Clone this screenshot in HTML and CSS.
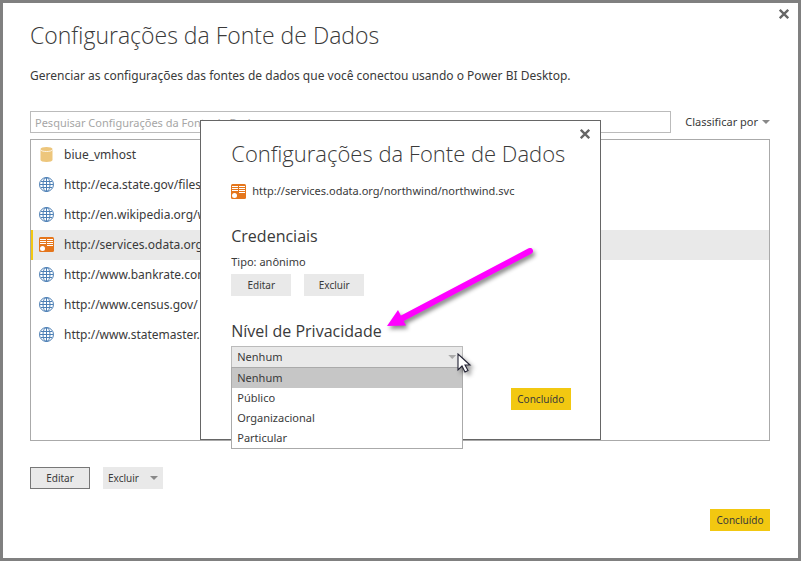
FILE: index.html
```html
<!DOCTYPE html>
<html lang="pt-BR">
<head>
<meta charset="utf-8">
<meta name="viewport" content="width=device-width, initial-scale=1">
<title>Configurações da Fonte de Dados</title>
<link rel="stylesheet" href="styles.css">
</head>
<body>
<svg class="sprite" aria-hidden="true">
  <symbol id="close" viewBox="0 0 10 10"><path d="M.8 .8l8.400 8.400M9.200 .8l-8.400 8.400" fill="none" stroke="#666" stroke-width="2.300"/></symbol>
  <symbol id="globe" viewBox="0 0 15 15"><g fill="none" stroke="#4c7fb5"><circle cx="7.500" cy="7.500" r="7"/><ellipse cx="7.500" cy="7.500" rx="3.500" ry="7"/><path d="M7.500 .5v14M.5 7.500h14M2 4.500h11M2 10.500h11"/></g></symbol>
  <symbol id="database" viewBox="0 0 15 15"><path d="M1.500 2.500v10.500c0 1 2.500 2 6 2s6-1 6-2V2.500z" fill="#edc67c"/><ellipse cx="7.500" cy="2" rx="6" ry="2" fill="#edc67c"/><path d="M1.500 2.700c.6 1.200 3 1.800 6 1.800s5.400-.6 6-1.800" fill="none" stroke="#fff" stroke-width=".8"/></symbol>
  <symbol id="feed" viewBox="0 0 15 15"><rect width="15" height="15" rx="1.500" fill="#e5761c"/><path d="M1 2.500h6M8 2.500h6M1 4.500h6M8 4.500h6M1 6.500h6M8 6.500h6M8 8.500h6" stroke="#fff"/><circle cx="3.500" cy="11.500" r="2.500" fill="#fff"/></symbol>
</svg>

<main class="window">
  <button class="close" type="button" aria-label="Fechar"><svg><use href="#close"/></svg></button>
  <h1 class="title">Configurações da Fonte de Dados</h1>
  <p class="intro">Gerenciar as configurações das fontes de dados que você conectou usando o Power BI Desktop.</p>

  <div class="toolbar">
    <input class="search" type="text" aria-label="Pesquisar" placeholder="Pesquisar Configurações da Fonte de Dados">
    <button class="sort" type="button">Classificar por <span class="caret"></span></button>
  </div>

  <ul class="sources">
    <li class="source"><svg class="icon"><use href="#database"/></svg>biue_vmhost</li>
    <li class="source"><svg class="icon"><use href="#globe"/></svg>http://eca.state.gov/files</li>
    <li class="source"><svg class="icon"><use href="#globe"/></svg>http://en.wikipedia.org/w</li>
    <li class="source selected"><svg class="icon"><use href="#feed"/></svg>http://services.odata.org</li>
    <li class="source"><svg class="icon"><use href="#globe"/></svg>http://www.bankrate.com</li>
    <li class="source"><svg class="icon"><use href="#globe"/></svg>http://www.census.gov/</li>
    <li class="source"><svg class="icon"><use href="#globe"/></svg>http://www.statemaster.</li>
  </ul>

  <div class="actions">
    <button class="button focused" type="button">Editar</button>
    <button class="button split" type="button">Excluir <span class="caret"></span></button>
  </div>
  <div class="footer"><button class="button primary" type="button">Concluído</button></div>
</main>

<div class="overlay">
  <section class="dialog" role="dialog" aria-labelledby="dialog-title">
    <button class="close" type="button" aria-label="Fechar"><svg><use href="#close"/></svg></button>
    <h2 class="title" id="dialog-title">Configurações da Fonte de Dados</h2>
    <p class="address"><svg class="icon"><use href="#feed"/></svg>http://services.odata.org/northwind/northwind.svc</p>

    <h3 class="heading">Credenciais</h3>
    <p class="kind">Tipo: anônimo</p>
    <div class="buttons">
      <button class="button" type="button">Editar</button>
      <button class="button" type="button">Excluir</button>
    </div>

    <label class="heading" for="privacy">Nível de Privacidade</label>
    <div class="dropdown">
      <select class="select" id="privacy">
        <option>Nenhum</option>
        <option>Público</option>
        <option>Organizacional</option>
        <option>Particular</option>
      </select>
      <span class="caret"></span>
      <ul class="options" role="listbox">
        <li class="option current" role="option" aria-selected="true">Nenhum</li>
        <li class="option" role="option">Público</li>
        <li class="option" role="option">Organizacional</li>
        <li class="option" role="option">Particular</li>
      </ul>
      <svg class="cursor" viewBox="0 0 20 24" aria-hidden="true"><path d="M1 1v16l4-4 3 6 3-1.500-3-5.500h5z" fill="#fff" stroke="#223" stroke-width="1.100"/></svg>
    </div>
    <div class="footer"><button class="button primary" type="button">Concluído</button></div>

    <svg class="arrow" viewBox="0 0 160 96" aria-hidden="true"><path d="M147 7L18 75" stroke="#f0f" stroke-width="6" stroke-linecap="round"/><path d="M4 82L15 66L23 81.500z" fill="#f0f"/></svg>
  </section>
</div>
</body>
</html>
```
FILE: styles.css
```css
* { box-sizing: border-box; margin: 0; padding: 0; }

body {
  font-family: "Noto Sans", "Open Sans", sans-serif;
  font-size: 12px;
  line-height: 20px;
  color: #3a3a3a;
  background: #fff;
}

button, input, select { font: inherit; color: inherit; border: 0; border-radius: 0; }
ul { list-style: none; }
svg { display: block; }
.sprite { position: absolute; width: 0; height: 0; }

.window {
  position: relative;
  display: flex;
  flex-direction: column;
  min-height: 100vh;
  padding: 16px 28px 27px 27px;
  border: 3px solid #808080;
}

.close { position: absolute; top: 6px; right: 9px; background: none; }
.close svg { width: 10px; height: 10px; }

.title, .heading { font-family: "Open Sans", "Noto Sans", sans-serif; }
.title { font-size: 23px; font-weight: 300; line-height: 32px; }

.intro { margin-top: 15px; }

.toolbar { display: flex; margin-top: 25px; }
.search {
  flex: 1;
  min-width: 0;
  height: 22px;
  padding: 0 4px;
  border: 1px solid #bbb;
  background: #fff;
  font-size: 11px;
}
.search::placeholder { color: #a6a6a6; opacity: 1; }
.sort {
  display: flex;
  align-items: center;
  gap: 4px;
  padding-left: 14px;
  background: none;
  font-size: 11px;
}

.caret {
  width: 8px;
  height: 4px;
  background: #888;
  clip-path: polygon(0 0, 100% 0, 50% 100%);
}

.sources { flex: 1; margin-top: 6px; border: 1px solid #aaa; }
.source {
  display: flex;
  align-items: center;
  gap: 10px;
  height: 30px;
  padding-left: 6px;
  border-left: 2px solid transparent;
}
.selected { background: #e9e9e9; border-left-color: #f2c811; }
.icon { flex: none; width: 15px; height: 15px; }
.source .icon { margin-bottom: 1px; }

.actions { display: flex; gap: 13px; margin-top: 26px; }
.button {
  min-width: 60px;
  height: 22px;
  font-size: 10px;
  background: #e9e9e9;
}
.focused { border: 1px solid #777; }
.split { display: flex; align-items: center; justify-content: space-between; padding: 0 5px; }
.primary { background: #f2c811; }
.footer { display: flex; justify-content: flex-end; margin-top: 20px; }

.overlay {
  position: absolute;
  inset: 0;
  display: grid;
  place-items: center;
  padding-bottom: 1px;
}
.dialog {
  position: relative;
  width: 50%;
  min-width: 400px;
  padding: 16px 29px 29px 30px;
  border: 1px solid #666;
  background: #fff;
  font-size: 11px;
}
.dialog .close { top: 8px; right: 10px; }
.dialog .title { font-size: 22px; }
.address { display: flex; align-items: center; gap: 6px; margin-top: 12px; }
.heading { display: block; font-size: 16px; font-weight: 400; line-height: 24px; }
h3.heading { margin-top: 23px; }
.kind { margin-top: 4px; }
.buttons { display: flex; gap: 13px; margin: 2px 0 23px; }
.dropdown { position: relative; width: 232px; margin-top: 3px; }
.select {
  display: block;
  width: 100%;
  height: 22px;
  padding: 0 5px;
  appearance: none;
  border: 1px solid #bbb;
  background: #e9e9e9;
}
.dropdown .caret { position: absolute; top: 9px; right: 7px; background: #aaa; }
.options {
  position: absolute;
  top: 21px;
  left: 0;
  right: 0;
  border: 1px solid #aaa;
  background: #fff;
}
.option { padding-left: 5px; }
.current { background: #c6c6c6; }
.cursor {
  position: absolute;
  top: 7px;
  right: -14px;
  width: 20px;
  height: 24px;
  filter: drop-shadow(3px 3px 2px #0006);
}
.arrow {
  position: absolute;
  top: 123px;
  left: 182px;
  width: 160px;
  height: 96px;
  filter: drop-shadow(2px 3px 2px #0007);
}
```
